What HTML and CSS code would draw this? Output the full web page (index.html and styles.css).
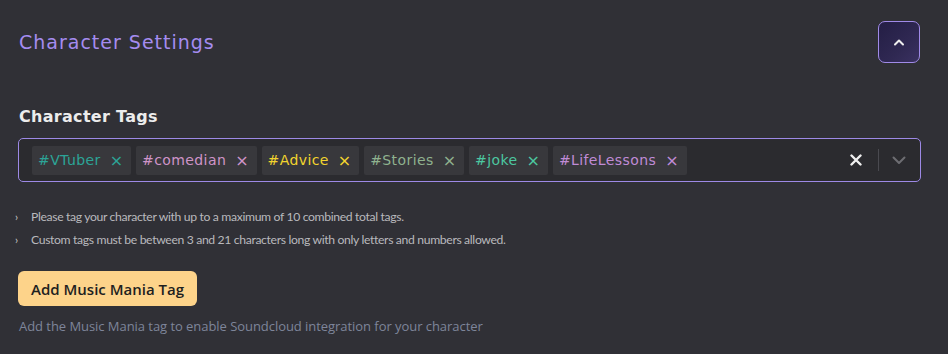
FILE: index.html
```html
<!DOCTYPE html>
<html>
<head>
    <title>Character Settings</title>
    <link rel="stylesheet" href="styles.css">
</head>
<body>
    <div class="panel">
        <div class="panel-header">
            <h2 class="panel-title">Character Settings</h2>
            <button class="collapse-btn" aria-label="Collapse">
                <svg width="12" height="8" viewBox="0 0 12 8"><path d="M2 6.5 L6 2.5 L10 6.5" fill="none" stroke="#eeeeee" stroke-width="2" stroke-linecap="round" stroke-linejoin="round"/></svg>
            </button>
        </div>

        <label class="field-label">Character Tags</label>
        <div class="tag-select">
            <div class="tag-list">
                <span class="tag tag-teal">#VTuber <span class="tag-x">×</span></span>
                <span class="tag tag-pink">#comedian <span class="tag-x">×</span></span>
                <span class="tag tag-yellow">#Advice <span class="tag-x">×</span></span>
                <span class="tag tag-sage">#Stories <span class="tag-x">×</span></span>
                <span class="tag tag-green">#joke <span class="tag-x">×</span></span>
                <span class="tag tag-purple">#LifeLessons <span class="tag-x">×</span></span>
            </div>
            <div class="select-controls">
                <svg class="clear-icon" width="12" height="12" viewBox="0 0 12 12"><path d="M1.5 1.5 L10.5 10.5 M10.5 1.5 L1.5 10.5" stroke="#f0f0f0" stroke-width="2.4" stroke-linecap="round"/></svg>
                <span class="divider"></span>
                <svg class="chevron-icon" width="14" height="9" viewBox="0 0 14 9"><path d="M1.5 1.5 L7 7 L12.5 1.5" fill="none" stroke="#6d6d72" stroke-width="2" stroke-linecap="round" stroke-linejoin="round"/></svg>
            </div>
        </div>

        <ul class="help-list">
            <li>Please tag your character with up to a maximum of 10 combined total tags.</li>
            <li>Custom tags must be between 3 and 21 characters long with only letters and numbers allowed.</li>
        </ul>

        <button class="music-btn">Add Music Mania Tag</button>
        <p class="music-note">Add the Music Mania tag to enable Soundcloud integration for your character</p>
    </div>
</body>
</html>
```

FILE: styles.css
```css
body {
    margin: 0;
    background-color: #303036;
    font-family: 'Open Sans', sans-serif;
    color: #e8e8e8;
}
.panel {
    padding: 20px 27px 0 18px;
}
.panel-header {
    display: flex;
    justify-content: space-between;
    align-items: center;
    height: 44px;
}
.panel-title {
    margin: 0 0 0 1px;
    font-family: 'DejaVu Sans', sans-serif;
    font-weight: normal;
    font-size: 19px;
    letter-spacing: 1px;
    color: #a58cf0;
}
.collapse-btn {
    width: 42px;
    height: 42px;
    display: flex;
    align-items: center;
    justify-content: center;
    background: linear-gradient(135deg, #241e45, #2f2852 60%, #3a3160);
    border: 1.5px solid #a08ae8;
    border-radius: 7px;
    padding: 0;
    margin-right: 1px;
}
.field-label {
    display: block;
    margin: 42px 0 0 1px;
    font-family: 'DejaVu Sans', sans-serif;
    font-size: 16px;
    font-weight: 600;
    letter-spacing: 0.3px;
    color: #ececec;
    line-height: 22px;
}
.tag-select {
    display: flex;
    align-items: center;
    justify-content: space-between;
    margin-top: 10px;
    height: 42px;
    background-color: #2b2b2f;
    border: 1px solid #9d89e6;
    border-radius: 5px;
    padding: 0 0 0 13px;
}
.tag-list {
    display: flex;
    gap: 5px;
}
.tag {
    display: flex;
    align-items: center;
    height: 29px;
    padding: 0 8px 0 6px;
    background-color: #38383c;
    border-radius: 2px;
    font-family: 'DejaVu Sans', sans-serif;
    font-size: 14px;
    letter-spacing: 0.4px;
}
.tag-x {
    margin-left: 9px;
    font-size: 16px;
    letter-spacing: 0;
}
.tag-teal { color: #2ca497; }
.tag-pink { color: #cf94c8; }
.tag-yellow { color: #f2d42e; }
.tag-sage { color: #8fb28f; }
.tag-green { color: #4cc7a0; }
.tag-purple { color: #c08bd6; }
.select-controls {
    display: flex;
    align-items: center;
    height: 100%;
}
.clear-icon {
    margin-right: 16px;
}
.divider {
    width: 1px;
    height: 22px;
    background-color: #4a4a50;
}
.chevron-icon {
    margin: 0 14px 0 13px;
}
.help-list {
    margin: 23px 0 0 -3px;
    padding: 0;
    font-family: Lato, sans-serif;
    font-size: 12.2px;
    letter-spacing: -0.35px;
    line-height: 23px;
    color: #b9b9bd;
    list-style: none;
}
.help-list li::before {
    content: '\203A';
    display: inline-block;
    width: 16px;
    font-size: 11px;
    color: #c8c8c8;
}
.music-btn {
    display: block;
    margin-top: 20px;
    height: 35px;
    padding: 0 13px;
    background-color: #fdd38a;
    border: none;
    border-radius: 6px;
    font-family: 'Open Sans', sans-serif;
    font-size: 15px;
    font-weight: 600;
    color: #1f1f1f;
}
.music-note {
    margin: 11px 0 0 1px;
    font-size: 13px;
    letter-spacing: -0.05px;
    color: #7e859a;
}
```
